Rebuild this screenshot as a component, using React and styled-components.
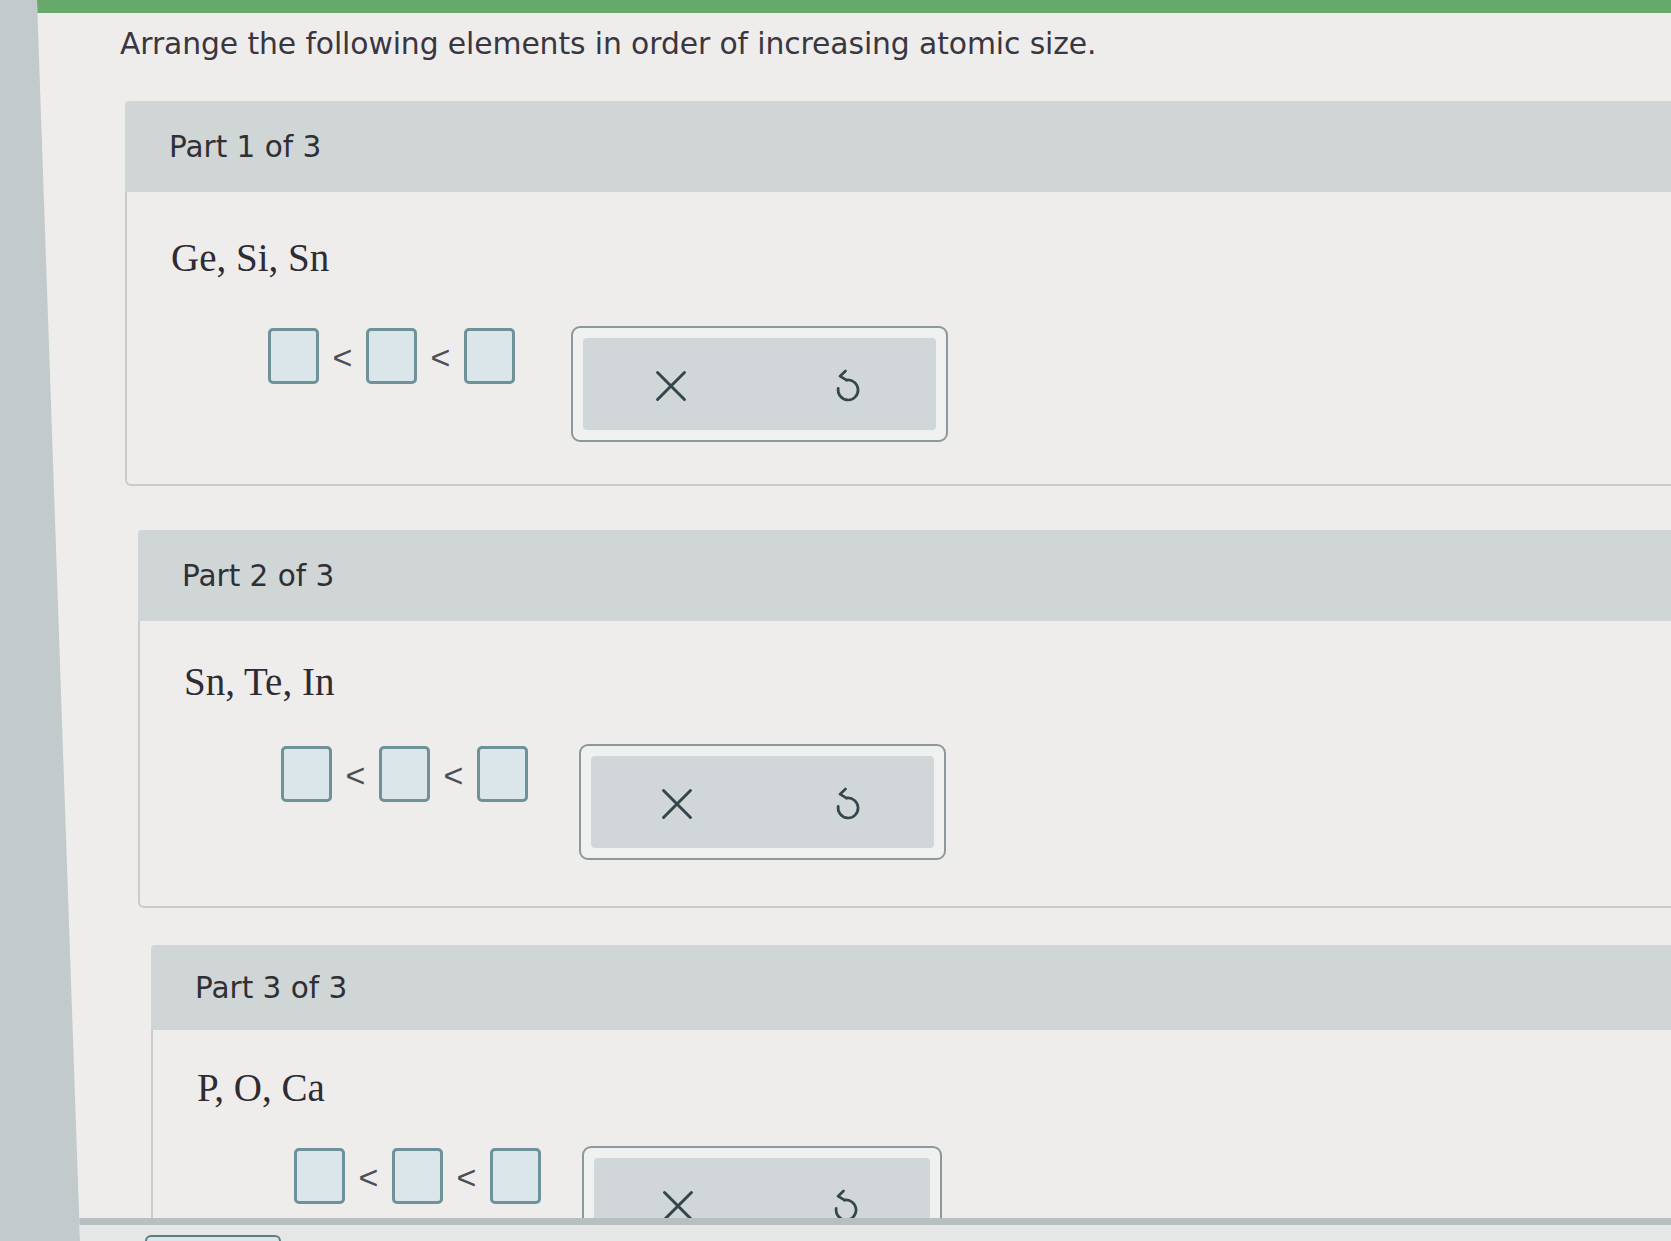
import React from "react";
import styled, { createGlobalStyle } from "styled-components";

const GlobalStyle = createGlobalStyle`
  html, body {
    margin: 0;
    padding: 0;
    background: #c3cacc;
  }
  * {
    box-sizing: border-box;
  }
`;

// the photo is taken at an angle, so lower parts sit a little further right
// and a little tighter
const parts = [
  {
    label: "Part 1 of 3",
    elements: "Ge, Si, Sn",
    indent: 0,
    space: { before: 38, header: 91, top: 44, gap: 46, bottom: 42 },
    tools: { gap: 56, width: 377 },
  },
  {
    label: "Part 2 of 3",
    elements: "Sn, Te, In",
    indent: 13,
    space: { before: 44, header: 91, top: 39, gap: 40, bottom: 46 },
    tools: { gap: 51, width: 367 },
  },
  {
    label: "Part 3 of 3",
    elements: "P, O, Ca",
    indent: 26,
    space: { before: 37, header: 85, top: 36, gap: 36, bottom: 40 },
    tools: { gap: 41, width: 360 },
  },
];

export default function App() {
  return (
    <>
      <GlobalStyle />
      <Page>
        <Main>
          <TopBar />
          <Content>
            <Title>
              Arrange the following elements in order of increasing atomic
              size.
            </Title>
            {parts.map((p) => (
              <Part key={p.label} {...p} />
            ))}
          </Content>
          <Footer>
            <FooterTab />
          </Footer>
        </Main>
      </Page>
    </>
  );
}

function ClearIcon() {
  return (
    <svg width="34" height="34" viewBox="0 0 24 24">
      <path
        d="M2.5 2.5 L21.5 21.5 M21.5 2.5 L2.5 21.5"
        stroke="#33464c"
        strokeWidth="2.1"
        strokeLinecap="round"
        fill="none"
      />
    </svg>
  );
}

function ResetIcon() {
  return (
    <svg width="30" height="36" viewBox="0 0 30 36">
      <path
        d="M13.5 12.1 A10 10 0 1 1 5.2 20.3"
        stroke="#33464c"
        strokeWidth="2.7"
        strokeLinecap="round"
        fill="none"
      />
      <path
        d="M12.5 3 L7 8.2 L13.5 12.1"
        stroke="#33464c"
        strokeWidth="2.7"
        strokeLinecap="round"
        strokeLinejoin="round"
        fill="none"
      />
    </svg>
  );
}

function Part({ label, elements, indent, space, tools }) {
  return (
    <Section $indent={indent} $before={space.before}>
      <Header $h={space.header}>{label}</Header>
      <Body $top={space.top} $gap={space.gap} $bottom={space.bottom}>
        <Elements>{elements}</Elements>
        <AnswerRow $gap={tools.gap}>
          <Boxes>
            <AnswerBox />
            <Less>&lt;</Less>
            <AnswerBox />
            <Less>&lt;</Less>
            <AnswerBox />
          </Boxes>
          <ToolGroup $w={tools.width}>
            <ToolInner>
              <ToolButton aria-label="clear">
                <ClearIcon />
              </ToolButton>
              <ToolButton aria-label="reset">
                <ResetIcon />
              </ToolButton>
            </ToolInner>
          </ToolGroup>
        </AnswerRow>
      </Body>
    </Section>
  );
}

const Page = styled.div`
  display: flex;
  width: 1671px;
  height: 1241px;
  padding-left: 37px;
  overflow: hidden;
`;

const Main = styled.div`
  flex: 1;
  display: flex;
  flex-direction: column;
  background: #eeedeb;
  clip-path: polygon(0 0, 100% 0, 100% 100%, 43px 100%);
`;

const TopBar = styled.div`
  height: 13px;
  background: #67a96b;
  flex-shrink: 0;
`;

const Content = styled.div`
  flex: 1;
  overflow: hidden;
  display: flex;
  flex-direction: column;
  padding-left: 83px;
`;

const Title = styled.h1`
  margin: 12px 0 0 0;
  font-family: "DejaVu Sans", Verdana, sans-serif;
  font-weight: normal;
  font-size: 29.8px;
  line-height: 38px;
  color: #3a3641;
  letter-spacing: -0.1px;
`;

const Section = styled.section`
  margin: ${(p) => p.$before}px 0 0 ${(p) => 5 + p.$indent}px;
  display: flex;
  flex-direction: column;
  flex-shrink: 0;
`;

const Header = styled.div`
  height: ${(p) => p.$h}px;
  display: flex;
  align-items: center;
  padding-left: 44px;
  background: #d0d6d6;
  border-radius: 4px 0 0 0;
  font-family: "DejaVu Sans", Verdana, sans-serif;
  font-size: 29.5px;
  color: #2f2f35;
`;

const Body = styled.div`
  border-left: 2px solid #c8cccc;
  border-bottom: 2px solid #c8cccc;
  border-radius: 0 0 0 6px;
  padding: ${(p) => p.$top}px 0 ${(p) => p.$bottom}px 44px;
  display: flex;
  flex-direction: column;
  gap: ${(p) => p.$gap}px;
`;

const Elements = styled.div`
  font-family: "Liberation Serif", "Times New Roman", serif;
  font-size: 39px;
  line-height: 44px;
  color: #2e2b33;
`;

const AnswerRow = styled.div`
  display: flex;
  align-items: flex-start;
  padding-left: 97px;
  gap: ${(p) => p.$gap}px;
`;

const Boxes = styled.div`
  display: flex;
  align-items: center;
  height: 57px;
  margin-top: 1px;
`;

const AnswerBox = styled.div`
  width: 51px;
  height: 56px;
  border: 3px solid #6f9199;
  border-radius: 5px;
  background: #dae6ea;
`;

const Less = styled.span`
  width: 47px;
  text-align: center;
  font-family: "Liberation Sans", Arial, sans-serif;
  font-size: 34px;
  font-weight: 300;
  color: #4c4f55;
  line-height: 1;
  padding-top: 2px;
`;

const ToolGroup = styled.div`
  width: ${(p) => p.$w}px;
  height: 116px;
  padding: 10px;
  border: 2px solid #8d989b;
  border-radius: 9px;
  background: #eff1f0;
`;

const ToolInner = styled.div`
  height: 100%;
  display: grid;
  grid-template-columns: 1fr 1fr;
  background: #d1d7d8;
  border-radius: 4px;
`;

const ToolButton = styled.button`
  border: none;
  background: transparent;
  display: flex;
  align-items: center;
  justify-content: center;
  padding: 4px 0 0 0;
  cursor: pointer;
`;

const Footer = styled.div`
  height: 23px;
  flex-shrink: 0;
  border-top: 7px solid #b7bfc1;
  background: #e5e7e6;
  padding-left: 108px;
`;

const FooterTab = styled.div`
  margin-top: 10px;
  width: 136px;
  height: 10px;
  border: 2px solid #5d7d85;
  border-bottom: none;
  border-radius: 6px 6px 0 0;
  background: #dbe5e7;
`;
